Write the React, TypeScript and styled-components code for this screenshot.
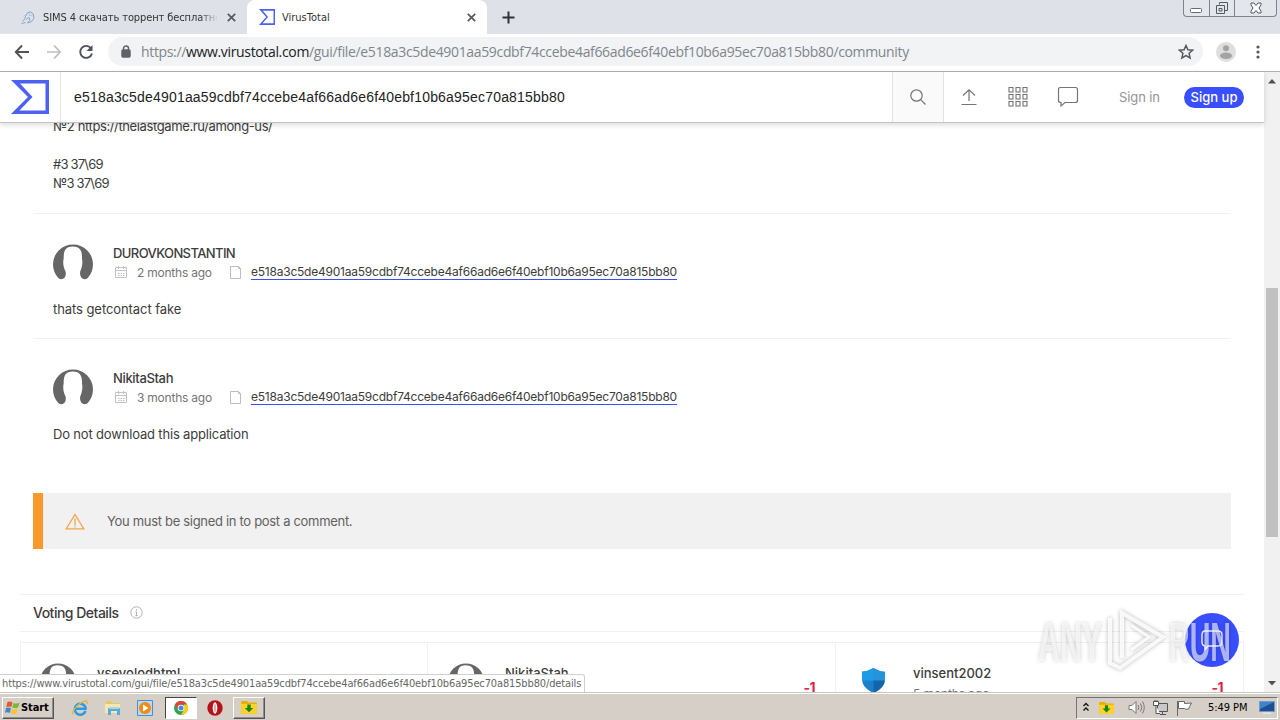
import React, { FC, ReactNode } from 'react';
import styled, { createGlobalStyle, css } from 'styled-components';

const BLUE = '#394eff';
const ORANGE = '#fb982a';
const DARK = '#3c3c3c';
const GREY = '#757575';
const LINE = '#f0f0f0';
const TASKBAR = '#d5cfc8';

const UI_FONT = "'DejaVu Sans Condensed', 'DejaVu Sans', sans-serif";
const URL_FONT = "'Open Sans', 'Noto Sans', sans-serif";
const SITE_FONT = "Inter, 'Liberation Sans', sans-serif";

const HASH = 'e518a3c5de4901aa59cdbf74ccebe4af66ad6e6f40ebf10b6a95ec70a815bb80';

const GlobalStyle = createGlobalStyle`
  * {
    box-sizing: border-box;
  }
  body {
    margin: 0;
    overflow: hidden;
    background: #fff;
  }
  svg {
    display: block;
    flex: none;
  }
`;

const Desktop = styled.div`
  width: 1280px;
  height: 720px;
  display: flex;
  flex-direction: column;
  position: relative;
  overflow: hidden;
  font-family: ${SITE_FONT};
  color: ${DARK};
  white-space: nowrap;
`;

/* browser chrome */

const TabStrip = styled.div`
  height: 34px;
  flex: none;
  display: flex;
  background: #dee1e7;
`;

const Tab = styled.div<{ $active?: boolean }>`
  width: ${(p) => (p.$active ? 240 : 247)}px;
  height: 34px;
  display: flex;
  align-items: center;
  padding: 0 11px 0 ${(p) => (p.$active ? 12 : 21)}px;
  font: 11px ${UI_FONT};
  color: #333;
  ${(p) =>
    p.$active &&
    css`
      background: #fff;
      border-radius: 8px 8px 0 0;
    `}
`;

const TabTitle = styled.div<{ $fade?: boolean; $gap: number }>`
  flex: 1;
  margin-left: ${(p) => p.$gap}px;
  margin-right: 9px;
  overflow: hidden;
  letter-spacing: ${(p) => (p.$fade ? -0.1 : 0)}px;
  ${(p) => p.$fade && 'mask-image: linear-gradient(to right, #000 90%, transparent);'}
`;

const NewTab = styled.div`
  padding: 11px 0 0 15px;
  flex: 1;
`;

const WindowButtons = styled.div`
  width: 94px;
  height: 17px;
  margin-right: 3px;
  display: flex;
  border: 1px solid #7f838b;
  border-top: 0;
  border-radius: 0 0 4px 4px;
  background: #e3e6eb;
`;

const WindowButton = styled.div<{ $width: number }>`
  width: ${(p) => p.$width}px;
  display: flex;
  justify-content: center;
  & + & {
    border-left: 1px solid #7f838b;
  }
`;

const Toolbar = styled.div`
  height: 38px;
  flex: none;
  display: flex;
  align-items: center;
  padding: 0 12px 2px 14px;
  background: #fff;
  border-bottom: 1px solid #b0b1b0;
`;

const NavButtons = styled.div`
  width: 94px;
  display: flex;
  gap: 16px;
`;

const Omnibox = styled.div`
  width: 1095px;
  height: 29px;
  display: flex;
  align-items: center;
  padding: 0 9px 0 12px;
  border-radius: 15px;
  background: #f1f3f5;
`;

const Url = styled.div`
  flex: 1;
  margin-left: 9px;
  font: 14px ${URL_FONT};
  letter-spacing: -0.345px;
  color: #80868b;
  b {
    font-weight: 400;
    color: #202124;
  }
`;

const ToolbarEnd = styled.div`
  flex: 1;
  display: flex;
  align-items: center;
  justify-content: space-between;
  padding-left: 13px;
  padding-right: 8px;
`;

/* site */

const Viewport = styled.div`
  height: 620px;
  flex: none;
  display: flex;
`;

const Site = styled.div`
  width: 1264px;
  display: flex;
  flex-direction: column;
`;

const SiteHeader = styled.header`
  height: 51px;
  flex: none;
  display: flex;
  align-items: center;
  position: relative;
  background: #fff;
  border-bottom: 1px solid #c4c4c4;
  box-shadow: 0 2px 5px rgba(0, 0, 0, 0.14);
`;

const LogoCell = styled.div`
  width: 61px;
  height: 50px;
  padding: 8px 0 0 11px;
  border-right: 1px solid #e4e4e4;
`;

const SearchText = styled.div`
  width: 831px;
  padding-left: 13px;
  font: 14px 'Liberation Sans', Arial, sans-serif;
  letter-spacing: 0.19px;
  color: #222;
`;

const SearchCell = styled.div`
  width: 52px;
  height: 50px;
  display: flex;
  align-items: center;
  justify-content: center;
  background: #fafafa;
  border: solid #e2e2e2;
  border-width: 0 1px;
`;

const HeaderIcons = styled.div`
  width: 175px;
  padding-left: 15px;
  display: flex;
  align-items: center;
  gap: 29px;
`;

const SignIn = styled.div`
  width: 65px;
  font-size: 13px;
  letter-spacing: -0.1px;
  color: #939393;
`;

const SignUp = styled.div`
  width: 60px;
  height: 21px;
  border-radius: 11px;
  background: ${BLUE};
  color: #fff;
  font-size: 13px;
  font-weight: 500;
  line-height: 21px;
  text-align: center;
`;

const SiteBody = styled.main`
  height: 569px;
  overflow: hidden;
  background: #fff;
`;

const Comments = styled.section`
  margin: -6px 33px 0;
  font-size: 13px;
  line-height: 19px;
`;

const CommentTail = styled.div`
  height: 96px;
  padding-left: 20px;
`;

const TextLine = styled.div<{ $spacing?: number }>`
  height: 19px;
  letter-spacing: ${(p) => p.$spacing || 0}px;
`;

const Comment = styled.article`
  height: 125px;
  border-top: 1px solid ${LINE};
  padding: 30px 20px 0;
`;

const CommentHead = styled.div`
  height: 56px;
  display: flex;
  gap: 20px;
`;

const Author = styled.div<{ $spacing?: number }>`
  font-size: 13px;
  font-weight: 500;
  line-height: 19px;
  letter-spacing: ${(p) => p.$spacing || 0}px;
`;

const Meta = styled.div`
  display: flex;
  align-items: center;
  height: 18px;
  padding-left: 2px;
  font-size: 12px;
  color: ${GREY};
`;

const When = styled.span`
  width: 93px;
  margin-left: 10px;
  letter-spacing: -0.23px;
`;

const HashLink = styled.a`
  margin-left: 10px;
  height: 15px;
  line-height: 14px;
  letter-spacing: -0.225px;
  color: ${DARK};
  border-bottom: 1px solid ${BLUE};
`;

const Alert = styled.div`
  height: 56px;
  margin: 30px 33px 0;
  display: flex;
  align-items: center;
  gap: 22px;
  padding-left: 22px;
  border-left: 10px solid ${ORANGE};
  background: #f1f1f1;
  color: #616161;
  font-size: 13px;
  letter-spacing: -0.31px;
`;

const VotingTitle = styled.div`
  height: 38px;
  margin: 45px 20px 0;
  padding: 0 0 1px 13px;
  display: flex;
  align-items: center;
  gap: 12px;
  border: solid ${LINE};
  border-width: 1px 0;
  font-size: 14px;
  font-weight: 500;
  letter-spacing: -0.5px;
`;

const Votes = styled.div`
  margin: 10px 20px 0;
  display: grid;
  grid-template-columns: repeat(3, 408px);
`;

const Vote = styled.div`
  height: 82px;
  display: flex;
  padding: 20px 20px 0 19px;
  border: 1px solid ${LINE};
  & + & {
    border-left-width: 0;
    padding-left: 20px;
  }
`;

const VoteInfo = styled.div`
  flex: 1;
  padding-left: 21px;
  font-size: 12px;
  line-height: 19px;
  letter-spacing: -0.1px;
  color: ${GREY};
  ${Author} {
    line-height: 21px;
    color: ${DARK};
  }
`;

const Score = styled.div`
  padding-top: 16px;
  font-size: 14px;
  font-weight: 700;
  letter-spacing: -0.5px;
  color: #e0214f;
`;

const ShieldBox = styled.div`
  width: 36px;
  height: 36px;
  display: flex;
  align-items: center;
  padding: 0 0 2px 5px;
`;

const ScrollBar = styled.div`
  width: 16px;
  display: flex;
  flex-direction: column;
  align-items: center;
  background: #f1f1f1;
`;

const Thumb = styled.div`
  width: 12px;
  height: 249px;
  margin: 203px 0 138px;
  background: #c1c1c1;
`;

/* things floating over the page */

const StatusBubble = styled.div`
  position: absolute;
  left: 0;
  top: 674px;
  width: 585px;
  height: 18px;
  padding-left: 2px;
  border: solid #d0d0d0;
  border-width: 1px 1px 0 0;
  border-radius: 0 3px 0 0;
  background: #fff;
  font: 11px/17px ${UI_FONT};
  color: #666;
  letter-spacing: -0.135px;
`;

const ChatButton = styled.div`
  position: absolute;
  left: 1185px;
  top: 613px;
  width: 54px;
  height: 54px;
  display: flex;
  align-items: center;
  justify-content: center;
  border-radius: 50%;
  background: ${BLUE};
`;

const Watermark = styled.svg`
  position: absolute;
  left: 1030px;
  top: 604px;
  filter: drop-shadow(0 0 2px rgba(0, 0, 0, 0.33));
`;

/* taskbar */

const Taskbar = styled.div`
  height: 28px;
  flex: none;
  display: flex;
  align-items: center;
  padding: 2px 2px 0;
  border-top: 1px solid #c9c5bf;
  box-shadow: inset 0 1px #fff;
  background: ${TASKBAR};
  font-family: ${UI_FONT};
`;

const raised = css`
  border: 1px solid;
  border-color: #fff #555 #555 #fff;
  box-shadow: inset -1px -1px #928d87;
`;

const StartButton = styled.div`
  width: 52px;
  height: 22px;
  display: flex;
  align-items: center;
  gap: 1px;
  padding-left: 2px;
  color: #000;
  font-size: 11px;
  font-weight: 700;
  letter-spacing: -0.1px;
  ${raised}
`;

const Launcher = styled.div`
  width: 111px;
  padding-left: 17px;
  display: flex;
  gap: 15px;
`;

const TaskButton = styled.div<{ $kind?: 'pressed' | 'raised' }>`
  width: 32px;
  height: 22px;
  margin-right: 2px;
  display: flex;
  align-items: center;
  justify-content: center;
  ${(p) =>
    p.$kind === 'pressed' &&
    css`
      background: #fff;
      border: 1px solid;
      border-color: #444 #fff #fff #444;
    `}
  ${(p) => p.$kind === 'raised' && raised}
`;

const Tray = styled.div`
  width: 202px;
  height: 22px;
  margin-left: auto;
  display: flex;
  align-items: center;
  padding-left: 5px;
  border: 1px solid;
  border-color: #77726d #fff #fff #77726d;
`;

const Clock = styled.div`
  width: 51px;
  margin-left: 15px;
  font-size: 11px;
  letter-spacing: -0.05px;
  color: #000;
`;

const TrayItem = styled.div<{ $left: number }>`
  margin-left: ${(p) => p.$left}px;
`;

type IconProps = { w: number; h?: number; color?: string; sw?: number; children: ReactNode };

const Icon: FC<IconProps> = ({ w, h = w, color = GREY, sw = 1.2, children }) => (
  <svg width={w} height={h} viewBox={`0 0 ${w} ${h}`} fill="none" stroke={color} strokeWidth={sw}>
    {children}
  </svg>
);

const VtLogo: FC<{ w: number; h: number }> = ({ w, h }) => (
  <svg width={w} height={h} viewBox="0 0 38 34" preserveAspectRatio="none">
    <path fill="#4d61f2" fillRule="evenodd" d="M0 0h38v34H0l17-17zM9 3.5L21.5 17 8.5 30.5H34.5V3.5z" />
  </svg>
);

const Close = () => (
  <Icon w={9} color="#55585d" sw={1.7}>
    <path d="M.8.8l7.4 7.4M8.2.8L.8 8.2" />
  </Icon>
);

const Avatar: FC<{ size: number }> = ({ size }) => (
  <svg width={size} height={size} viewBox="0 0 40 40">
    <path
      fill="#666"
      d="M5.500 34.200A20 20 0 1 1 34.500 34.200Q31 36.500 28.200 33.500C26.500 30.500 26.800 27.500 28 25.500C29.200 22 29.800 18 29 14.500C29.400 6 26.300 2.600 19.700 2.600S10.500 6 10.700 14.500C9.800 18 10.300 22 11.600 25.500C13 27.500 13.400 30.500 11.800 33.500Q9 36.500 5.500 34.200z"
    />
  </svg>
);

const Calendar = () => (
  <Icon w={12} h={12} color="#c2c2c2" sw={1}>
    <path d="M.5 1.500h11v10H.5zM.5 4.500h11M3.500 0v3M8.500 0v3M3 7.500h1.500M5.500 7.500h1.500M8 7.500h1.500M3 9.500h1.500M5.500 9.500h1.500M8 9.500h1.500" />
  </Icon>
);

const FileIcon = () => (
  <Icon w={11} h={13} color="#bdbdbd" sw={1}>
    <path d="M.5.5h8l2 2v10H.5zM8.500.5v2h2" />
  </Icon>
);

const ChatIcon = () => (
  <Icon w={22} h={22} sw={1.2}>
    <path d="M3.500 1.500h15q2 0 2 2v11q0 2-2 2H8L4 20v-3.500Q1.500 16.500 1.500 14.500v-11q0-2 2-2z" />
  </Icon>
);

const Folder: FC<{ w?: number }> = ({ w = 16 }) => (
  <svg width={w} height={w * 0.8} viewBox="0 0 16 13">
    <path fill="#e9ae00" d="M0 1q0-1 1-1h5l1.500 1.500H15q1 0 1 1V12q0 1-1 1H1q-1 0-1-1z" />
    <path fill="#fed22b" d="M0 3h16v9q0 1-1 1H1q-1 0-1-1z" />
    <path fill="#16860f" d="M6.300 3.500h3.400V7h2.600L8 11.500 3.700 7h2.600z" />
  </svg>
);

const comments = [
  { author: 'DUROVKONSTANTIN', spacing: -0.6, when: '2 months ago', text: 'thats getcontact fake', ls: -0.07 },
  { author: 'NikitaStah', spacing: -0.35, when: '3 months ago', text: 'Do not download this application', ls: -0.17 },
];

const Browser = () => (
  <>
    <TabStrip>
      <Tab>
        <Icon w={14} h={15} color="#86a4cc" sw={1}>
          <path d="M1.500 11.500Q4 9.500 4.500 6.500Q6 1.500 9.500 1.800Q13 3 13 7.500Q12 12 6.500 13Q10 10.500 8.500 8Q6.500 7 5.500 9.500M.5 13.500l4-1" />
          <path d="M5 5.500L2.500 6M9.500 2L8 5l4 1" stroke="#b0c3de" />
        </Icon>
        <TabTitle $gap={8} $fade>
          SIMS 4 скачать торрент бесплатно
        </TabTitle>
        <Close />
      </Tab>
      <Tab $active>
        <VtLogo w={16} h={16} />
        <TabTitle $gap={7}>VirusTotal</TabTitle>
        <Close />
      </Tab>
      <NewTab>
        <Icon w={13} color="#303238" sw={2}>
          <path d="M6.500.5v12M.5 6.500h12" />
        </Icon>
      </NewTab>
      <WindowButtons>
        <WindowButton $width={25}>
          <Icon w={14} h={16} color="#666a72" sw={1}>
            <rect x="1.500" y="8.500" width="11" height="4" rx="1" fill="#fff" />
          </Icon>
        </WindowButton>
        <WindowButton $width={26}>
          <Icon w={14} h={16} color="#555962" sw={1}>
            <path d="M4.500 4.500v-2h8v8h-3" />
            <path d="M1.500 5.500h8v8h-8zM4 8.500h3v2.500H4z" />
          </Icon>
        </WindowButton>
        <WindowButton $width={42}>
          <Icon w={12} h={16} color="#555962" sw={1}>
            <path fill="#fff" d="M1 3h3l2 2.500L8 3h3v2L9 8l2 3v2H8l-2-2.500L4 13H1v-2l2-3-2-3z" />
          </Icon>
        </WindowButton>
      </WindowButtons>
    </TabStrip>
    <Toolbar>
      <NavButtons>
        <Icon w={16} color="#4f5256" sw={1.9}>
          <path d="M15 8H2M8 1.500L1.800 8 8 14.500" />
        </Icon>
        <Icon w={16} color="#bcbec1" sw={1.7}>
          <path d="M1 8h13M8 1.500L14.200 8 8 14.500" />
        </Icon>
        <Icon w={16} color="#4f5256" sw={1.9}>
          <path d="M13.200 4.500A6 6 0 1 0 14 9.500" />
          <path d="M14.500 1v6h-6z" fill="#4f5256" stroke="none" />
        </Icon>
      </NavButtons>
      <Omnibox>
        <Icon w={12} h={13} color="#5f6368" sw={1.5}>
          <rect x="2" y="5" width="8" height="7" rx="1" fill="#5f6368" />
          <path d="M3.500 5V3.500a2.500 2.500 0 0 1 5 0V5" />
        </Icon>
        <Url>
          https://<b>www.virustotal.com</b>/gui/file/{HASH}/community
        </Url>
        <Icon w={16} color="#55585d" sw={1.5}>
          <path d="M8 1.500l1.900 4.300 4.700.4-3.500 3.100 1 4.600L8 11.500l-4.100 2.400 1-4.600L1.400 6.200l4.700-.4z" />
        </Icon>
      </Omnibox>
      <ToolbarEnd>
        <svg width="20" height="20" viewBox="0 0 20 20">
          <circle cx="10" cy="10" r="10" fill="#dedede" />
          <circle cx="10" cy="6.300" r="3" fill="#a3a3a3" />
          <ellipse cx="10" cy="13.700" rx="6" ry="3.200" fill="#a3a3a3" />
        </svg>
        <svg width="4" height="14" viewBox="0 0 4 14" fill="#55585d">
          <circle cx="2" cy="2" r="1.600" />
          <circle cx="2" cy="7" r="1.600" />
          <circle cx="2" cy="12" r="1.600" />
        </svg>
      </ToolbarEnd>
    </Toolbar>
  </>
);

const Header = () => (
  <SiteHeader>
    <LogoCell>
      <VtLogo w={38} h={34} />
    </LogoCell>
    <SearchText>{HASH}</SearchText>
    <SearchCell>
      <Icon w={16}>
        <circle cx="6.500" cy="6.500" r="5.700" />
        <path d="M10.700 10.700l4.800 4.800" />
      </Icon>
    </SearchCell>
    <HeaderIcons>
      <Icon w={20} h={18}>
        <path d="M2.500 16.500h15M10 13V2M4 7.500L10 1.800l6 5.700" />
      </Icon>
      <Icon w={20} h={20} sw={1.1}>
        {[1, 8, 15].map((y) =>
          [1.5, 8.5, 15.5].map((x) => <rect key={`${x}-${y}`} x={x - 0.5} y={y - 0.5} width="4" height="4.500" />)
        )}
      </Icon>
      <ChatIcon />
    </HeaderIcons>
    <SignIn>Sign in</SignIn>
    <SignUp>Sign up</SignUp>
  </SiteHeader>
);

const Body = () => (
  <SiteBody>
    <Comments>
      <CommentTail>
        <TextLine $spacing={-0.38}>№2 https://thelastgame.ru/among-us/</TextLine>
        <TextLine />
        <TextLine $spacing={-0.8}>#3 37\69</TextLine>
        <TextLine $spacing={-0.8}>№3 37\69</TextLine>
      </CommentTail>
      {comments.map((c) => (
        <Comment key={c.author}>
          <CommentHead>
            <Avatar size={40} />
            <div>
              <Author $spacing={c.spacing}>{c.author}</Author>
              <Meta>
                <Calendar />
                <When>{c.when}</When>
                <FileIcon />
                <HashLink>{HASH}</HashLink>
              </Meta>
            </div>
          </CommentHead>
          <TextLine $spacing={c.ls}>{c.text}</TextLine>
        </Comment>
      ))}
    </Comments>
    <Alert>
      <Icon w={20} h={17} color="#f2a64b" sw={1.3}>
        <path d="M10 1.500L18.800 15.800H1.200zM10 5.500v7M10 13.300v1.300" />
      </Icon>
      You must be signed in to post a comment.
    </Alert>
    <VotingTitle>
      Voting Details
      <Icon w={13} color="#b0b0b0" sw={1}>
        <circle cx="6.500" cy="6.500" r="5.700" />
        <path d="M6.500 3v1.500M5.500 5.800h1v4M5.300 9.700h2.500" />
      </Icon>
    </VotingTitle>
    <Votes>
      <Vote>
        <Avatar size={36} />
        <VoteInfo>
          <Author>vsevolodhtml</Author>
        </VoteInfo>
      </Vote>
      <Vote>
        <Avatar size={36} />
        <VoteInfo>
          <Author>NikitaStah</Author>
        </VoteInfo>
        <Score>-1</Score>
      </Vote>
      <Vote>
        <ShieldBox>
          <svg width="25" height="25" viewBox="0 0 26 26">
            <path fill="#1c7fc9" d="M13 0q6 3.500 12 4v7q0 10-12 15Q1 21 1 11V4q6-.5 12-4z" />
            <path fill="#1e9be4" d="M13 0v13H1V4q6-.5 12-4z" />
            <path fill="#1464ad" d="M13 13h11.800q-.8 8-11.800 13z" />
            <path fill="#36b9f1" d="M13 0q6 3.500 12 4v9H13z" opacity=".35" />
          </svg>
        </ShieldBox>
        <VoteInfo>
          <Author>vinsent2002</Author>5 months ago
        </VoteInfo>
        <Score>-1</Score>
      </Vote>
    </Votes>
  </SiteBody>
);

const Bottom = () => (
  <Taskbar>
    <StartButton>
      <svg width="15" height="14" viewBox="0 0 15 14">
        <path fill="#e7572c" d="M2.500 1Q5 0 7.500 1.500L6.300 6Q4 5 1.300 6z" />
        <path fill="#7ab83a" d="M8.500 2Q11 3.200 14.500 1.800L13 6.500Q10 7.500 7.300 6.500z" />
        <path fill="#3f87d6" d="M1 7Q3.500 6 6 7.200L4.800 12Q2.500 10.800 0 11.800z" />
        <path fill="#f7c52c" d="M7 7.700Q9.500 8.800 12.700 7.700L11.400 12.500Q8.500 13.500 5.800 12.500z" />
      </svg>
      Start
    </StartButton>
    <Launcher>
      <Icon w={18} color="#2e9be0" sw={2.6}>
        <path d="M14.500 12A5.500 5.500 0 1 1 14.500 8.500v1.200H5" />
        <path d="M2 15.500C0 12 9 2.500 15 2q2 .2 1 3" stroke="#e4b83a" strokeWidth="1.300" />
      </Icon>
      <svg width="18" height="18" viewBox="0 0 18 18">
        <path fill="#e8c766" d="M2 2h5l1 2h8v10H2z" />
        <path fill="#f8e7a8" d="M1 5h15v9H1z" />
        <path fill="#58a9dc" d="M4 9h12v7h-3v-4H7v4H4z" />
        <path fill="#a8d6ef" d="M5 8h10v2H5z" />
      </svg>
      <svg width="16" height="18" viewBox="0 0 16 18">
        <path fill="#b8d9f2" stroke="#4d8fc9" d="M.5 1.500h15v15H.5z" />
        <circle cx="8" cy="9" r="6" fill="#f28a16" />
        <path fill="#fff" d="M6 5.500l5.500 3.500L6 12.500z" />
      </svg>
    </Launcher>
    <TaskButton $kind="pressed">
      <svg width="14" height="14" viewBox="0 0 14 14">
        <circle cx="7" cy="7" r="7" fill="#31a350" />
        <path fill="#dd4433" d="M.9 3.500A7 7 0 0 1 13.100 3.500H7L4 8.700z" />
        <path fill="#fbcb1e" d="M13.100 3.500A7 7 0 0 1 7 14l3-5.200V3.500z" />
        <circle cx="7" cy="7" r="3.300" fill="#fff" />
        <circle cx="7" cy="7" r="2.500" fill="#4687e8" />
      </svg>
    </TaskButton>
    <TaskButton>
      <svg width="16" height="16" viewBox="0 0 16 16">
        <circle cx="8" cy="8" r="7.700" fill="#b5121b" />
        <ellipse cx="8" cy="8" rx="2.300" ry="5.800" fill="#fff" />
        <ellipse cx="8" cy="8" rx=".7" ry="4.500" fill="#c98a8d" />
      </svg>
    </TaskButton>
    <TaskButton $kind="raised">
      <Folder />
    </TaskButton>
    <Tray>
      <Icon w={8} h={12} color="#111" sw={1.3}>
        <path d="M1.500 4L4 1.500 6.500 4M1.500 8.500L4 6l2.500 2.500" />
      </Icon>
      <TrayItem $left={9}>
        <Folder w={15} />
      </TrayItem>
      <TrayItem $left={14}>
        <Icon w={17} h={15} color="#777" sw={1}>
          <path d="M1 5.500h3l4-4v12l-4-4H1z" fill="#fff" />
          <path d="M10 5q1.500 2.500 0 5M12.500 3.500q2.500 4 0 8M14.500 1.500q3.500 6 0 12" />
        </Icon>
      </TrayItem>
      <TrayItem $left={7}>
        <Icon w={17} h={16} color="#555" sw={1}>
          <path d="M5.500 3.500h10v8h-10zM8 14.500h6M10.500 11.500v3" fill="#c8c8c8" />
          <path d="M1.500 1.500h5v4h-5zM3 0v2M5 0v2M4 5.500v8h4" fill="#fff" />
        </Icon>
      </TrayItem>
      <TrayItem $left={7}>
        <Icon w={17} h={16} color="#666" sw={1}>
          <path d="M1.500 1v15M2.500 1.500h6v2l7-.5q-2 3.500-3 6-3 1-4-.5h-6z" fill="#fff" />
        </Icon>
      </TrayItem>
      <Clock>5:49 PM</Clock>
      <svg width="16" height="14" viewBox="0 0 16 14">
        <path fill="#1c4f96" stroke="#7a98bd" d="M.5.5h15v10H.5z" />
        <path fill="#3e83ce" d="M1 1h14L1 8z" />
        <path fill="#dfe6ee" d="M4 11.500h8v1.500H4z" />
      </svg>
    </Tray>
  </Taskbar>
);

const App: FC = () => (
  <Desktop>
    <GlobalStyle />
    <Browser />
    <Viewport>
      <Site>
        <Header />
        <Body />
      </Site>
      <ScrollBar>
        <Icon w={16} h={13} color="none">
          <path d="M4 11.500L8 7l4 4.500z" fill="#505050" />
        </Icon>
        <Thumb />
        <Icon w={16} h={13} color="none">
          <path d="M4 6l4 4.500L12 6z" fill="#505050" />
        </Icon>
      </ScrollBar>
    </Viewport>
    <Bottom />
    <StatusBubble>https://www.virustotal.com/gui/file/{HASH}/details</StatusBubble>
    <ChatButton>
      <Icon w={24} h={22} color="#fff" sw={1.3}>
        <path d="M5 2h13q4 0 4 4v7q0 4-4 4H8l-3 3.500V17q-3-.5-3-4V6q0-4 3-4z" />
      </Icon>
    </ChatButton>
    <Watermark width="210" height="76" viewBox="0 0 210 76">
      <g
        fill="#fff"
        fillOpacity=".6"
        fontFamily="'Liberation Sans', sans-serif"
        fontSize="55"
        fontWeight="700"
      >
        <text x="8" y="57" textLength="64" lengthAdjust="spacingAndGlyphs">
          ANY
        </text>
        <text x="139" y="57" textLength="62" lengthAdjust="spacingAndGlyphs">
          RUN
        </text>
      </g>
      <g fill="none" stroke="#fff" strokeOpacity=".85" strokeWidth="4">
        <path d="M92 54V9l41 24-43 31-10-5V14" />
        <path d="M101 21l18 12-18 13" strokeWidth="3" />
      </g>
    </Watermark>
  </Desktop>
);

export default App;
